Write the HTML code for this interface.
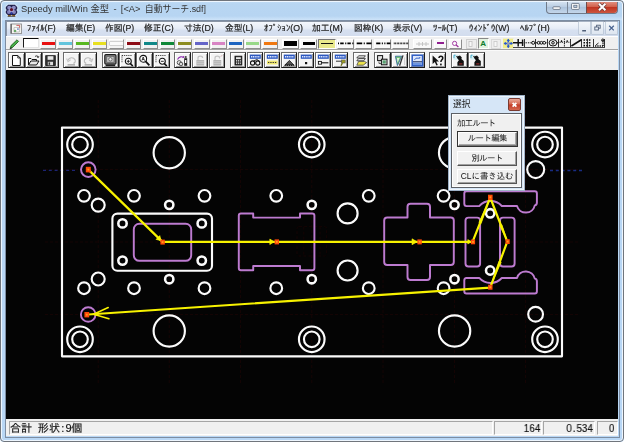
<!DOCTYPE html>
<html lang="ja">
<head>
<meta charset="utf-8">
<title>Speedy mill/Win 金型</title>
<style>
html,body{margin:0;padding:0;background:#fff;}
body{width:624px;height:442px;overflow:hidden;position:relative;font-family:"Liberation Sans","Noto Sans CJK JP",sans-serif;}
#win{position:absolute;left:0;top:0;width:624px;height:442px;overflow:hidden;
 background:linear-gradient(#c4def6 0px,#b8d6f2 4px,#b7d5f2 16px,#cbe2f8 19.500px,#b9d7f4 21px,#b9d7f5 100%);border-radius:4px 4px 4px 4px;}

#frame{position:absolute;left:0;top:0;width:622.400px;height:440.400px;border:0.800px solid #70757c;border-radius:4px;box-shadow:inset 0 0 0 1px #eef6fe;}
#inb{position:absolute;left:4.800px;top:20px;width:613.400px;height:416.400px;border:0.800px solid #7c8da3;}
.abs{position:absolute;}
#title,.mi,.st,.dl,.db,#dlgt{will-change:transform;}
#title{position:absolute;left:20.5px;top:2.900px;font-size:9.33px;line-height:13px;color:#333;white-space:nowrap;}
/* window buttons */
#wbtn{position:absolute;left:546px;top:0;width:72px;height:13.5px;border:1px solid #6f7a8a;border-top:none;border-radius:0 0 4px 4px;overflow:hidden;box-sizing:border-box;background:linear-gradient(#dfeaf6,#bccfe4 50%,#a9c0da 51%,#c4d6ea);}
#wbtn .c{position:absolute;left:39px;top:0;width:33px;height:13.5px;background:linear-gradient(#e5a294,#d2614c 48%,#bf3420 52%,#cf5b45);border-left:1px solid #6f4a48;}
#wbtn .s1{position:absolute;left:19.5px;top:0;width:1px;height:13px;background:#7b8797;}
/* menubar */
#menubar{position:absolute;left:5.500px;top:20.500px;width:612.800px;height:15.5px;box-sizing:border-box;border-top:1px solid #8a94a3;border-left:1px solid #8a94a3;background:linear-gradient(#f4f7fc,#e6ecf6 45%,#d6e0f0 60%,#d3ddee);}
.mi{-webkit-text-stroke:0.200px #222;position:absolute;top:23.2px;font-size:8.75px;line-height:11px;color:#222;white-space:nowrap;font-family:"Liberation Sans","IPAGothic","Noto Sans CJK JP",sans-serif;}
/* toolbars */
#tb1{position:absolute;left:5.500px;top:36px;width:612.800px;height:14px;background:#f0f0f0;border-top:1px solid #fff;border-bottom:1px solid #a4a4a4;box-sizing:border-box;}
#tb2{position:absolute;left:5.500px;top:50px;width:612.800px;height:20px;background:#f0f0f0;border-top:1px solid #fafafa;box-sizing:border-box;}
.sw{position:absolute;top:38.5px;height:10px;width:15.6px;box-sizing:border-box;background:#f2f2f2;border:1px solid;border-color:#fff #8e8e8e #8e8e8e #fff;}
.sw i{position:absolute;left:0.300px;right:0.300px;top:2.200px;height:3.600px;}
.ln{position:absolute;top:38.5px;height:10px;width:17.4px;box-sizing:border-box;background:#f9f9f9;border:1px solid;border-color:#fff #8e8e8e #8e8e8e #fff;}
.ln i{position:absolute;left:1.5px;right:1.5px;}
.bt{position:absolute;top:51.8px;width:16.6px;height:16px;box-sizing:border-box;background:#f4f4f4;border:1px solid;border-color:#6a6a6a #1c1c1c #1c1c1c #6a6a6a;box-shadow:inset 1px 1px 0 #fff,inset -1px -1px 0 #9c9c9c;}
.bt svg{position:absolute;left:0;top:0.300px;width:14.6px;height:15px;}
/* canvas */
#cv{position:absolute;left:5.500px;top:70px;width:612.800px;height:348.5px;background:#040404;}
/* status */
#status{position:absolute;left:5.500px;top:418.600px;width:612.800px;height:17.700px;background:#f0f0f0;}
.pane{position:absolute;top:420.900px;height:14.300px;box-sizing:border-box;border:1px solid;border-color:#a5a5a5 #fff #fff #a5a5a5;}
.st{-webkit-text-stroke:0.150px #111;position:absolute;top:422.300px;font-size:11.100px;line-height:12px;color:#111;white-space:nowrap;font-family:"Liberation Sans","IPAGothic","Noto Sans CJK JP",sans-serif;}
/* dialog */
#dlg{position:absolute;left:448px;top:94.5px;width:76.5px;height:96px;box-sizing:border-box;background:#d6e6f7;border:1px solid #9fb3c8;box-shadow:inset 0 0 0 1px #eef5fc;}
#dlgt{position:absolute;left:453px;top:98.600px;font-size:8.8px;line-height:11px;color:#222;}
#dlgx{position:absolute;left:507.5px;top:97.5px;width:13px;height:13.5px;box-sizing:border-box;border:1px solid #7a3a30;border-radius:2px;background:linear-gradient(#e9a898,#d5654f 48%,#c23a25 52%,#d4674f);}
#dlgc{position:absolute;left:451px;top:113px;width:70.5px;height:74.5px;box-sizing:border-box;background:#f0f0f0;border:1px solid #5c6066;box-shadow:inset 0 0 0 1px #fdfdfd;}
.dl{position:absolute;font-size:8.400px;line-height:11px;color:#111;white-space:nowrap;font-family:"Liberation Sans","IPAGothic","Noto Sans CJK JP",sans-serif;}
.db{position:absolute;left:457.200px;width:60.200px;height:15.200px;box-sizing:border-box;background:#f1f1f1;border:1px solid;border-color:#fff #555 #555 #fff;box-shadow:inset -1px -1px 0 #a0a0a0;font-size:8.400px;line-height:13px;text-align:center;color:#111;white-space:nowrap;font-family:"Liberation Sans","IPAGothic","Noto Sans CJK JP",sans-serif;}
.mdi{position:absolute;top:22px;width:11px;height:12px;box-sizing:border-box;background:linear-gradient(#f4f7fb,#dde5f0);box-shadow:0 0 0 0.7px #b4c0d0;}
.mdi svg{position:absolute;left:0;top:0}
.sn{font-size:11.600px;transform:scaleX(0.860);transform-origin:right center;}
.snp{position:absolute;top:38.6px;width:11.5px;height:9.6px;box-sizing:border-box;background:#f2f2f2;border-right:1px solid #333;border-bottom:1px solid #444;}
.snp svg{position:absolute;left:0;top:-0.4px}
.hw{display:inline-block;width:5.600px;text-align:center;white-space:pre;}
</style>
</head>
<body>
<div id="win">
<svg class="abs" style="left:5px;top:4.200px;filter:drop-shadow(0 0 0.800px #fff)" width="13" height="13" viewBox="0 0 13 13">
<path d="M3.200 0.800H9.800L12.200 3V5L11.200 6L12.200 7V9L10 11.200H3L0.800 9V7L1.800 6L0.800 5V3Z" fill="#20204c"/>
<circle cx="4.200" cy="3.800" r="2" fill="#8d8cc4"/><circle cx="8.800" cy="3.800" r="2" fill="#8d8cc4"/><circle cx="3.900" cy="8" r="1.900" fill="#8483bc"/><circle cx="9.100" cy="8" r="1.900" fill="#8483bc"/>
<circle cx="6.500" cy="6" r="2.500" fill="#a4a2d4"/><circle cx="6.500" cy="5.600" r="1.600" fill="#5e1226"/><circle cx="6.500" cy="9.300" r="1" fill="#2a3cb4"/>
<path d="M3 11.700H5.800M7.200 11.700H10" stroke="#8a6420" stroke-width="1.200"/><path d="M2.600 12.400H10.400" stroke="#2a2420" stroke-width="0.700"/></svg>

<div id="title">Speedy mill/Win 金型<span style="word-spacing:1.700px"> - [&lt;A&gt; </span><span style="font-size:8.900px">自動サーチ.sdf]</span></div>
<div id="wbtn"><div class="s1"></div><div class="c"></div></div>
<svg class="abs" style="left:546px;top:0" width="72" height="14" viewBox="0 0 72 14">
<rect x="7" y="6.8" width="7.2" height="2.600" rx="0.6" fill="#fff" stroke="#5a6677" stroke-width="0.8"/>
<rect x="25.6" y="3.400" width="7.6" height="6" rx="0.8" fill="#fff" stroke="#5a6677" stroke-width="0.8"/><rect x="27.8" y="5.2" width="3.2" height="2.2" fill="#b9cbe0" stroke="#5a6677" stroke-width="0.7"/>
<path d="M53 3.800L59.400 10.2M59.4 3.8L53 10.2" stroke="#6a3a38" stroke-width="3.4"/><path d="M53 3.8L59.4 10.2M59.4 3.8L53 10.200" stroke="#fff" stroke-width="2"/>
</svg>
<div id="menubar"></div>
<svg class="abs" style="left:10px;top:23px" width="13" height="12" viewBox="0 0 13 12">
<rect x="1" y="1" width="10.400" height="9.600" fill="#f6f6f2" stroke="#8a8a8a" stroke-width="0.900"/><path d="M1.200 1V10.600" stroke="#666" stroke-width="1.300"/>
<path d="M4 4.600H9.400V9H4Z" fill="#fff" stroke="#aaa" stroke-width="0.700"/><path d="M6.400 2.400H9.600V4.800" stroke="#c85050" stroke-width="0.900" fill="none"/><rect x="4" y="6.800" width="2.200" height="2.200" fill="#68a868"/><rect x="7" y="5.400" width="1.800" height="1.400" fill="#7088c8"/></svg>
<div class="mdi" style="left:578.6px"><svg width="11" height="12"><path d="M3.2 8.800H7" stroke="#50607a" stroke-width="1.600"/></svg></div>
<div class="mdi" style="left:592.2px"><svg width="11" height="12"><rect x="4.6" y="3.2" width="3.6" height="3" fill="none" stroke="#50607a" stroke-width="0.9"/><rect x="2.800" y="5" width="3.6" height="3" fill="#e8eef7" stroke="#50607a" stroke-width="0.9"/></svg></div>
<div class="mdi" style="left:605.8px"><svg width="11" height="12"><path d="M3.200 3.800L7.800 8.400M7.800 3.800L3.200 8.400" stroke="#4a6490" stroke-width="1.300"/></svg></div>
<div class="mi" style="left:26.8px">ﾌｧｲﾙ(F)</div>
<div class="mi" style="left:66.2px">編集(E)</div>
<div class="mi" style="left:105px">作図(P)</div>
<div class="mi" style="left:144.2px">修正(C)</div>
<div class="mi" style="left:184.2px">寸法(D)</div>
<div class="mi" style="left:225px">金型(L)</div>
<div class="mi" style="left:263.8px">ｵﾌﾟｼｮﾝ(O)</div>
<div class="mi" style="left:312.3px">加工(M)</div>
<div class="mi" style="left:353.5px">図枠(K)</div>
<div class="mi" style="left:393px">表示(V)</div>
<div class="mi" style="left:433px">ﾂｰﾙ(T)</div>
<div class="mi" style="left:468.8px">ｳｨﾝﾄﾞｳ(W)</div>
<div class="mi" style="left:520px">ﾍﾙﾌﾟ(H)</div>
<div id="tb1"></div>
<div class="sw" style="left:22.6px;width:16.600px;top:38px;height:10.400px;background:#fff;border-width:1.600px 1px 1px 1.300px;border-color:#0c0c0c #e4e4e4 #e4e4e4 #1c1c1c"></div>
<div class="sw" style="left:40.3px"><i style="background:#e81010"></i></div>
<div class="sw" style="left:57.4px"><i style="background:#62c4dc"></i></div>
<div class="sw" style="left:74.4px"><i style="background:#58b820"></i></div>
<div class="sw" style="left:91.5px"><i style="background:#e8e020"></i></div>
<div class="sw" style="left:108.6px"><i style="background:#fafafa;box-shadow:0 0 0 0.6px #bbb"></i></div>
<div class="sw" style="left:125.7px"><i style="background:#8c0a14"></i></div>
<div class="sw" style="left:142.8px"><i style="background:#108888"></i></div>
<div class="sw" style="left:159.8px"><i style="background:#108838"></i></div>
<div class="sw" style="left:176.9px"><i style="background:#8c8c20"></i></div>
<div class="sw" style="left:194.0px"><i style="background:#6464c8"></i></div>
<div class="sw" style="left:211.1px"><i style="background:#d884c4"></i></div>
<div class="sw" style="left:228.2px"><i style="background:#1c64c0"></i></div>
<div class="sw" style="left:245.2px"><i style="background:#98d888"></i></div>
<div class="sw" style="left:262.3px"><i style="background:#f07810"></i></div>
<svg class="abs" style="left:8.5px;top:37.5px" width="11" height="12" viewBox="0 0 11 12"><path d="M1.2 10.2 L2 7.6 L8 1.8 L9.6 3.4 L3.6 9.4 Z" fill="#48b048" stroke="#1c5c1c" stroke-width="0.8"/><path d="M0.8 10.8 L3.2 9.8" stroke="#222" stroke-width="0.9"/></svg>
<div class="ln" style="left:281.7px;"><i style="top:1.8px;height:4.6px;background:#000"></i></div>
<div class="ln" style="left:300.1px;"><i style="top:2.900px;height:2.400px;background:#000"></i></div>
<div class="ln" style="left:318.4px;background:#e9e98c;border-color:#777 #fff #fff #777;"><i style="top:3.200px;height:1.600px;background:#111"></i></div>
<div class="ln" style="left:336.8px;"><svg class="abs" style="left:0;top:-0.200px" width="16" height="8"><path d="M0 4.300H1M2.2 4.300H5.7M7.2 4.300H8.3M9.4 4.300H12.8M14.3 4.300H15.4" stroke="#000" stroke-width="1.700" fill="none"/></svg></div>
<div class="ln" style="left:355.1px;"><svg class="abs" style="left:0;top:-0.200px" width="16" height="8"><path d="M0.7 4.300H6.2M7.7 4.300H8.8M10.4 4.300H15.5" stroke="#000" stroke-width="1.700" fill="none"/></svg></div>
<div class="ln" style="left:373.5px;"><svg class="abs" style="left:0;top:-0.200px" width="16" height="8"><path d="M1.2 4.300H5.4M6.8 4.300H7.9M9.3 4.300H10.4M11.7 4.300H15.5" stroke="#000" stroke-width="1.700" fill="none"/></svg></div>
<div class="ln" style="left:391.9px;"><svg class="abs" style="left:0;top:-0.200px" width="16" height="8"><path d="M0.8 4.300H15.4" stroke="#000" stroke-width="1.700" fill="none" stroke-dasharray="0.800 0.700"/></svg></div>
<div class="ln" style="left:412.7px;width:19px"><svg class="abs" style="left:0;top:0" width="17" height="8"><path d="M2 4H15M5 2V6M8.5 2V6M12 2V6" stroke="#c4c4c4" stroke-width="1" fill="none"/></svg></div>
<div class="ln" style="left:434.3px;width:13px"><i style="top:2.8px;height:2.2px;background:#902090;left:2px;right:2px"></i></div>
<div class="ln" style="left:449.3px;width:13px"><svg class="abs" style="left:0;top:0" width="11" height="8"><circle cx="4.6" cy="3.400" r="2.100" fill="none" stroke="#9a2c9a" stroke-width="0.900"/><path d="M6.200 5L8.400 7" stroke="#9a2c9a" stroke-width="1.200"/></svg></div>
<svg class="abs" style="left:465.5px;top:38.5px" width="11" height="10"><rect x="0.5" y="0.5" width="10" height="9" fill="#ededed" stroke="#d0d0d0"/><rect x="3" y="2.5" width="3" height="5" fill="#f8f8f8" stroke="#c0c0c0" stroke-width="0.8"/></svg>
<div class="abs" style="left:478px;top:38.3px;width:11px;height:10.4px;box-sizing:border-box;border:1px solid;border-color:#888 #fff #fff #888;background:#e4f2e0"></div><div class="abs" style="left:480.2px;top:39.2px;font-size:8px;line-height:9px;font-weight:bold;color:#0c7c2c">A</div>
<svg class="abs" style="left:490.8px;top:38.5px" width="10" height="10"><rect x="0.5" y="0.5" width="9" height="9" fill="#efefef" stroke="#dadada"/><rect x="3" y="2.5" width="3" height="5" fill="#f8f8f8" stroke="#c8c8c8" stroke-width="0.8"/></svg>
<svg class="abs" style="left:503px;top:38px" width="11" height="11" viewBox="0 0 11 11">
<rect x="0" y="0.6" width="10.6" height="9.6" fill="#f0ec88"/>
<path d="M5.3 1.4V9.400M1.4 5.4H9.2" stroke="#2858d0" stroke-width="1.5"/><path d="M5.3 0.8L3.600 3.100H7ZM5.3 10L3.6 7.7H7ZM0.6 5.4L2.900 3.700V7.100ZM10 5.4L7.700 3.7V7.1Z" fill="#2858d0"/><circle cx="5.3" cy="5.4" r="1.3" fill="#9aa0b8"/></svg>
<div class="snp" style="left:513.2px"><svg width="11" height="10" viewBox="0 0 11 10"><g stroke="#111" stroke-width="1" fill="none"><path d="M0 4.800H10.500M5.200 1V8.600M9.6 1.600V8" stroke-width="1.500"/></g></svg></div>
<div class="snp" style="left:524.7px"><svg width="11" height="10" viewBox="0 0 11 10"><g stroke="#111" stroke-width="1" fill="none"><path d="M0.5 4.8H7" stroke-dasharray="1.4 1"/><circle cx="8.200" cy="4.8" r="1.500"/></g></svg></div>
<div class="snp" style="left:536.2px"><svg width="11" height="10" viewBox="0 0 11 10"><g stroke="#111" stroke-width="1" fill="none"><path d="M0 4.8H10.500"/><circle cx="2.6" cy="4.8" r="1.400" fill="#f2f2f2"/><circle cx="5.4" cy="4.8" r="1.4" fill="#f2f2f2"/><circle cx="8.200" cy="4.8" r="1.4" fill="#f2f2f2"/></g></svg></div>
<div class="snp" style="left:547.7px"><svg width="11" height="10" viewBox="0 0 11 10"><g stroke="#111" stroke-width="1" fill="none"><ellipse cx="5" cy="4.8" rx="3.900" ry="3.200"/><circle cx="5" cy="4.800" r="1.300"/><path d="M8.900 4.8H10.500"/></g></svg></div>
<div class="snp" style="left:559.2px"><svg width="11" height="10" viewBox="0 0 11 10"><g stroke="#111" stroke-width="1" fill="none"><path d="M5.4 0.600V9M0.5 4.200H10.400" stroke-dasharray="1.3 0.9"/><path d="M2.500 2.200V4M8.200 2.200V4" stroke-width="1.200"/></g></svg></div>
<div class="snp" style="left:570.7px"><svg width="11" height="10" viewBox="0 0 11 10"><g stroke="#111" stroke-width="1" fill="none"><path d="M0.400 8L10.400 1.800" stroke-width="1.600"/></g></svg></div>
<div class="snp" style="left:582.2px"><svg width="11" height="10" viewBox="0 0 11 10"><g stroke="#111" stroke-width="1" fill="none"><path d="M1.500 2H9.500M1.5 4.800H9.5M1.5 7.600H9.5" stroke-dasharray="1.500 1.200" stroke-width="1.600"/><path d="M5.500 0.8V9" stroke-width="0.800"/></g></svg></div>
<div class="snp" style="left:593.7px"><svg width="11" height="10" viewBox="0 0 11 10"><g stroke="#111" stroke-width="1" fill="none"><path d="M1 8H9M9 8V1.500" stroke-dasharray="1.3 1" stroke-width="1.500"/><path d="M2 7L4.500 5" stroke-width="0.900"/><circle cx="8.800" cy="2.200" r="1.200"/></g></svg></div>
<div id="tb2"></div>
<div class="bt" style="left:8.0px"><svg viewBox="0 0 14.6 15"><path d="M3.5 2.5H8.8L11.3 5V12.5H3.5Z" fill="#fff" stroke="#111" stroke-width="1"/><path d="M8.8 2.5V5H11.3" fill="none" stroke="#111" stroke-width="0.8"/></svg></div>
<div class="bt" style="left:25.1px"><svg viewBox="0 0 14.6 15"><path d="M2.5 12V5.5H5L6 6.5H10.5V8" fill="#fff" stroke="#111" stroke-width="1"/><path d="M2.5 12L4.8 8H13L10.5 12Z" fill="#e8e8e8" stroke="#111" stroke-width="1"/><path d="M9 3.5C10.5 2.3 12 2.8 12.3 4.4M12.3 4.4L11 3.9M12.3 4.4L12.9 3.2" fill="none" stroke="#111" stroke-width="0.8"/></svg></div>
<div class="bt" style="left:42.2px"><svg viewBox="0 0 14.6 15"><rect x="2.7" y="2.7" width="9.6" height="9.8" fill="#333" stroke="#111" stroke-width="0.8"/><rect x="4.6" y="3.2" width="5.8" height="3.6" fill="#e8e8e8"/><rect x="4.8" y="8.8" width="5.2" height="3.4" fill="#ddd"/><rect x="5.6" y="9.4" width="1.5" height="2.4" fill="#333"/></svg></div>
<div class="bt" style="left:63.3px"><svg viewBox="0 0 14.6 15"><path d="M4 7.300C5 4.300 9.500 3.800 11 6.800C11.800 8.600 10.800 10 9.400 10.400" fill="none" stroke="#bcbcbc" stroke-width="1.1"/><path d="M2.6 5.5L4 8.6L6.6 6.8" fill="none" stroke="#c6c6c6" stroke-width="1.1"/><path d="M3.600 11.800H11" stroke="#9c9c9c" stroke-width="1.200"/></svg></div>
<div class="bt" style="left:80.4px"><svg viewBox="0 0 14.6 15"><path d="M10.600 7.300C9.600 4.300 5.100 3.800 3.600 6.800C2.800 8.600 3.800 10 5.200 10.400" fill="none" stroke="#bcbcbc" stroke-width="1.1"/><path d="M12 5.5L10.6 8.6L8 6.8" fill="none" stroke="#c6c6c6" stroke-width="1.1"/><path d="M3.600 11.800H11" stroke="#9c9c9c" stroke-width="1.200"/></svg></div>
<div class="bt" style="left:102.0px"><svg viewBox="0 0 14.6 15"><rect x="1.800" y="1.600" width="11.200" height="9.600" rx="1.200" fill="#8a8a8a" stroke="#1c1c1c" stroke-width="1.200"/><rect x="3.800" y="3.400" width="7.200" height="5.800" fill="#c4c4c4" stroke="#555" stroke-width="0.600"/><circle cx="7.400" cy="6.300" r="1.700" fill="#f0f0f0" stroke="#444" stroke-width="0.700"/><path d="M2.600 12.500H12.200" stroke="#222" stroke-width="1.300"/></svg></div>
<div class="bt" style="left:119.1px"><svg viewBox="0 0 14.6 15"><path d="M2 2.5H12M2 2.5V10" stroke="#222" stroke-width="0.9" stroke-dasharray="1 0.9" fill="none"/><circle cx="8.3" cy="8.3" r="3" fill="#fff" stroke="#111" stroke-width="1.1"/><path d="M6.8 8.3H9.8M8.3 6.8V9.8" stroke="#111" stroke-width="0.9"/><path d="M10.4 10.6L12.8 13" stroke="#111" stroke-width="1.6"/></svg></div>
<div class="bt" style="left:136.2px"><svg viewBox="0 0 14.6 15"><circle cx="6.2" cy="5.8" r="3.4" fill="#fff" stroke="#111" stroke-width="1.1"/><path d="M4.9 7.6L6.2 4L7.5 7.6M5.4 6.5H7" stroke="#111" stroke-width="0.8" fill="none"/><path d="M8.6 8.4L12.4 12.4" stroke="#111" stroke-width="1.7"/></svg></div>
<div class="bt" style="left:153.3px"><svg viewBox="0 0 14.6 15"><path d="M2 2.5H12M2 2.5V10" stroke="#222" stroke-width="0.9" stroke-dasharray="1 0.9" fill="none"/><circle cx="8.3" cy="8.3" r="3" fill="#fff" stroke="#111" stroke-width="1.1"/><path d="M6.8 8.3H9.8" stroke="#111" stroke-width="0.9"/><path d="M10.4 10.6L12.8 13" stroke="#111" stroke-width="1.6"/></svg></div>
<div class="bt" style="left:174.4px"><svg viewBox="0 0 14.6 15"><path d="M2.5 6.5C4 3.5 7 3.2 9 4.4" fill="none" stroke="#9030b0" stroke-width="1.1"/><path d="M9 4.4L7.4 4.6M9 4.4L8.4 3" stroke="#9030b0" stroke-width="0.9"/><circle cx="4.2" cy="9.6" r="2" fill="#eee" stroke="#333" stroke-width="0.8"/><circle cx="6" cy="11" r="1.8" fill="#ddd" stroke="#333" stroke-width="0.8"/><rect x="9.2" y="5.2" width="3" height="7.6" fill="#222"/><rect x="9.8" y="3" width="1.8" height="2.4" fill="#555"/><rect x="10" y="7" width="1.4" height="3" fill="#fff"/></svg></div>
<div class="bt" style="left:191.5px"><svg viewBox="0 0 14.6 15"><path d="M5 7V5C5 2.6 9.6 2.6 9.6 5" fill="none" stroke="#c4c4c4" stroke-width="1.2"/><rect x="3.4" y="7" width="7.8" height="5.6" fill="#b4b4b4"/><path d="M3.4 8.8H11.2M3.4 10.6H11.2" stroke="#d4d4d4" stroke-width="0.7"/></svg></div>
<div class="bt" style="left:208.6px"><svg viewBox="0 0 14.6 15"><path d="M5 7V5C5 2.6 9.6 2.6 9.6 5V5.6" fill="none" stroke="#c4c4c4" stroke-width="1.2"/><rect x="3.4" y="7" width="7.8" height="5.6" fill="#b4b4b4"/><path d="M3.4 8.8H11.2M3.4 10.6H11.2" stroke="#d4d4d4" stroke-width="0.7"/><path d="M10.6 3.4L12.4 2.4" stroke="#d8b0b0" stroke-width="0.9"/></svg></div>
<div class="bt" style="left:229.6px"><svg viewBox="0 0 14.6 15"><rect x="4" y="3.2" width="6.8" height="8.8" fill="#333" stroke="#111" stroke-width="0.9"/><rect x="5" y="4.200" width="4.800" height="1.800" fill="#e8e8e8"/><path d="M5 7.4H9.800M5 9H9.8M5 10.600H9.8" stroke="#ddd" stroke-width="1" stroke-dasharray="1.2 0.8"/></svg></div>
<div class="bt" style="left:246.7px"><svg viewBox="0 0 14.6 15"><rect x="1.8" y="1.6" width="11" height="4.2" fill="#2c58c0"/><path d="M3 3.7H11.6" stroke="#dfe8ff" stroke-width="1.4" stroke-dasharray="1.2 0.6"/><circle cx="4.6" cy="10" r="2.1" fill="none" stroke="#111" stroke-width="1.1"/><circle cx="9.8" cy="10" r="2.1" fill="none" stroke="#111" stroke-width="1.1"/><path d="M5.5 8L9 6.6M9 6.6L11.6 8.2" stroke="#111" stroke-width="0.9" fill="none"/></svg></div>
<div class="bt" style="left:263.7px"><svg viewBox="0 0 14.6 15"><rect x="1.8" y="1.6" width="11" height="4.2" fill="#2c58c0"/><path d="M3 3.7H11.6" stroke="#dfe8ff" stroke-width="1.4" stroke-dasharray="1.2 0.6"/><rect x="2" y="7.6" width="10.6" height="3.8" fill="#f0e870"/><path d="M3 9.5H11.6" stroke="#333" stroke-width="1" stroke-dasharray="1.3 1"/></svg></div>
<div class="bt" style="left:280.8px"><svg viewBox="0 0 14.6 15"><rect x="1.8" y="1.6" width="11" height="4.2" fill="#2c58c0"/><path d="M3 3.7H11.6" stroke="#dfe8ff" stroke-width="1.4" stroke-dasharray="1.2 0.6"/><path d="M3 12L7.4 7.4L11.8 12Z" fill="#555" stroke="#111" stroke-width="0.8"/><path d="M2.4 12.4H12.4" stroke="#111" stroke-width="1" stroke-dasharray="1.4 0.8"/></svg></div>
<div class="bt" style="left:297.8px"><svg viewBox="0 0 14.6 15"><rect x="1.8" y="1.6" width="11" height="4.2" fill="#2c58c0"/><path d="M3 3.7H11.6" stroke="#dfe8ff" stroke-width="1.4" stroke-dasharray="1.2 0.6"/><rect x="6" y="9" width="2.2" height="2.2" fill="#111"/></svg></div>
<div class="bt" style="left:314.8px"><svg viewBox="0 0 14.6 15"><rect x="1.8" y="1.6" width="11" height="4.2" fill="#2c58c0"/><path d="M3 3.7H11.6" stroke="#dfe8ff" stroke-width="1.4" stroke-dasharray="1.2 0.6"/><rect x="2.4" y="8.4" width="3" height="2.8" fill="#fff" stroke="#111" stroke-width="0.9"/><path d="M5.4 9.8H12.4" stroke="#111" stroke-width="1.1"/></svg></div>
<div class="bt" style="left:331.8px"><svg viewBox="0 0 14.6 15"><rect x="1.8" y="1.6" width="11" height="4.2" fill="#2c58c0"/><path d="M3 3.7H11.6" stroke="#dfe8ff" stroke-width="1.4" stroke-dasharray="1.2 0.6"/><path d="M3 8.2H9.6" stroke="#333" stroke-width="1"/><rect x="8.6" y="7" width="3.6" height="3" fill="#a0a020" stroke="#555" stroke-width="0.6"/><path d="M9.4 10L8 12.8" stroke="#777720" stroke-width="1.4"/></svg></div>
<div class="bt" style="left:352.7px"><svg viewBox="0 0 14.6 15"><path d="M4.6 2.800H11.400L9.600 5H2.800Z" fill="#f4f4f4" stroke="#222" stroke-width="0.8"/><path d="M4.6 5.600H11.4L9.6 7.800H2.8Z" fill="#f4f4f4" stroke="#222" stroke-width="0.8"/><path d="M4.6 8.400H10.400L12.600 9.600L9.200 12.200H2.800Z" fill="#ece24c" stroke="#444" stroke-width="0.8"/></svg></div>
<div class="bt" style="left:374.3px"><svg viewBox="0 0 14.6 15"><rect x="2.6" y="2.6" width="5" height="5" fill="#e0e0e0" stroke="#111" stroke-width="1"/><rect x="6.4" y="6.2" width="5.6" height="5.6" fill="#e0e0e0" stroke="#111" stroke-width="1"/><rect x="7.6" y="7.4" width="3.2" height="3.2" fill="#58a070"/><path d="M4 8.5V10.5H6" stroke="#333" stroke-width="0.8" fill="none"/></svg></div>
<div class="bt" style="left:391.4px"><svg viewBox="0 0 14.6 15"><path d="M3.400 3.200H9.800L5.400 12.600Z" fill="#74c474" stroke="#3a6a9a" stroke-width="0.9"/><path d="M5 5H7.600L5.600 9.400Z" fill="#e8f4e8"/><path d="M11 2.400L7.600 12.800" stroke="#333" stroke-width="1.300"/><path d="M12.600 4.500V12" stroke="#c4c4c4" stroke-width="0.800"/></svg></div>
<div class="bt" style="left:408.5px"><svg viewBox="0 0 14.6 15"><rect x="2.200" y="2.200" width="10.400" height="10.600" fill="#dfe8fa" stroke="#2c5cc4" stroke-width="1.500"/><path d="M3 8.800H12" stroke="#1c2c58" stroke-width="1.100"/><path d="M4.400 7L6 5.200H9.800V4" stroke="#2c5cc4" stroke-width="0.900" fill="none"/><rect x="3" y="9.600" width="8.800" height="2.400" fill="#6c94e0"/></svg></div>
<div class="bt" style="left:429.4px"><svg viewBox="0 0 14.6 15"><path d="M2.6 2.4V11L4.8 9L6.4 12.6L7.8 12L6.2 8.4H9Z" fill="#111"/><path d="M9 5C9 2.6 12.8 2.6 12.8 5C12.8 6.8 10.9 6.8 10.9 9" fill="none" stroke="#111" stroke-width="1.5"/><rect x="10.1" y="10.6" width="1.6" height="1.8" fill="#111"/></svg></div>
<div class="bt" style="left:451.0px"><svg viewBox="0 0 14.6 15"><rect x="1.600" y="1.800" width="5" height="5" fill="#d8f0f4"/><path d="M5.800 3.200L8 2.400L9.800 4.400L9.400 6L11.800 8V12.800H5.400V9.200L7 7L5.600 5.400Z" fill="#111"/><path d="M4.600 3L7 6.400" stroke="#111" stroke-width="1.200"/><rect x="7.200" y="10.400" width="3.200" height="1" fill="#a82c2c"/><path d="M2 2.200H3.600M2 2.200V5.200" stroke="#38a8c8" stroke-width="0.900" fill="none"/></svg></div>
<div class="bt" style="left:468.1px"><svg viewBox="0 0 14.6 15"><rect x="1.600" y="1.800" width="5" height="5" fill="#d8f0f4"/><path d="M5.800 3.200L8 2.400L9.800 4.400L9.400 6L11.800 8V12.800H5.400V9.200L7 7L5.600 5.400Z" fill="#111"/><path d="M4.600 3L7 6.400" stroke="#111" stroke-width="1.200"/><rect x="7.200" y="10.400" width="3.200" height="1" fill="#a82c2c"/><path d="M2 2.200H3.600M2 2.200V5.200" stroke="#38a8c8" stroke-width="0.900" fill="none"/></svg></div>
<!--CANVAS-->
<div id="cv"></div>
<svg class="abs" style="left:0;top:0" width="624" height="442" viewBox="0 0 624 442">
<defs><clipPath id="cvclip"><rect x="5.500" y="70" width="612.800" height="348.600"/></clipPath></defs>
<g clip-path="url(#cvclip)" fill="none" stroke-linejoin="round">
<g stroke="#140404" stroke-width="1" stroke-dasharray="3 2">
<path d="M98.25 100V385"/>
<path d="M169.25 100V385"/>
<path d="M240.5 100V385"/>
<path d="M311.75 100V385"/>
<path d="M383 100V385"/>
<path d="M454.5 100V385"/>
<path d="M525.5 100V385"/>
<path d="M45 169.5H580"/>
<path d="M45 242H580"/>
<path d="M45 314.5H580"/>
<rect x="297" y="226.600" width="29.600" height="29.400" rx="2"/><path d="M303.800 226.600V256M320 226.600V256"/>
</g>
<path d="M43 170.400H77" stroke="#1c2474" stroke-width="1.300" stroke-dasharray="3 2.800"/>
<path d="M550 170.500H583" stroke="#182c84" stroke-width="1.300" stroke-dasharray="3 2.800"/>
<g stroke="#fbfbfb" stroke-width="2.150">
<rect x="62" y="127.6" width="500" height="228.7"/>
<circle cx="80" cy="144.5" r="12.8"/>
<circle cx="80" cy="144.5" r="7.8"/>
<circle cx="80" cy="339.3" r="12.8"/>
<circle cx="80" cy="339.3" r="7.8"/>
<circle cx="311.75" cy="144.5" r="12.8"/>
<circle cx="311.75" cy="144.5" r="7.8"/>
<circle cx="311.75" cy="339.3" r="12.8"/>
<circle cx="311.75" cy="339.3" r="7.8"/>
<circle cx="545" cy="144.5" r="12.8"/>
<circle cx="545" cy="144.5" r="7.8"/>
<circle cx="545" cy="339.3" r="12.8"/>
<circle cx="545" cy="339.3" r="7.8"/>
<circle cx="169.25" cy="152.7" r="15.65"/>
<circle cx="169.25" cy="331" r="15.65"/>
<circle cx="454.6" cy="152.7" r="15.65"/>
<circle cx="454.6" cy="331" r="15.65"/>
<circle cx="535.7" cy="169.6" r="8.5"/>
<circle cx="535.6" cy="314.3" r="7.4"/>
<circle cx="84" cy="195.8" r="5.85"/>
<circle cx="84" cy="288.2" r="5.85"/>
<circle cx="134" cy="195.8" r="5.85"/>
<circle cx="134" cy="288.2" r="5.85"/>
<circle cx="204.5" cy="195.8" r="5.85"/>
<circle cx="204.5" cy="288.2" r="5.85"/>
<circle cx="276.25" cy="195.8" r="5.85"/>
<circle cx="276.25" cy="288.2" r="5.85"/>
<circle cx="368.75" cy="195.8" r="5.85"/>
<circle cx="368.75" cy="288.2" r="5.85"/>
<circle cx="443.6" cy="195.8" r="5.85"/>
<circle cx="443.6" cy="288.2" r="5.85"/>
<circle cx="98.2" cy="205.1" r="6.5"/>
<circle cx="98.2" cy="279" r="6.5"/>
<circle cx="169.25" cy="204.8" r="4.15" stroke-width="2.550"/>
<circle cx="169.25" cy="279.2" r="4.15" stroke-width="2.550"/>
<circle cx="311.75" cy="204.8" r="4.15" stroke-width="2.550"/>
<circle cx="311.75" cy="279.2" r="4.15" stroke-width="2.550"/>
<circle cx="454.5" cy="204.8" r="4.15" stroke-width="2.550"/>
<circle cx="454.5" cy="279.2" r="4.15" stroke-width="2.550"/>
<circle cx="490.2" cy="213.3" r="4.2" stroke-width="2.550"/>
<circle cx="490.2" cy="270.5" r="4.2" stroke-width="2.550"/>
<circle cx="347.6" cy="213.4" r="10"/>
<circle cx="347.6" cy="270.5" r="10"/>
<rect x="112.400" y="213.600" width="99.600" height="57.100" rx="5"/>
<circle cx="122.5" cy="223.4" r="4.2" stroke-width="2.550"/>
<circle cx="122.5" cy="260.6" r="4.2" stroke-width="2.550"/>
<circle cx="201.75" cy="223.4" r="4.2" stroke-width="2.550"/>
<circle cx="201.75" cy="260.6" r="4.2" stroke-width="2.550"/>
</g>
<g stroke="#bd7bd0" stroke-width="1.950">
<circle cx="88.3" cy="169.6" r="7.3"/>
<circle cx="88.2" cy="314.5" r="7.3"/>
<rect x="133.8" y="223.8" width="57.4" height="37" rx="5.5"/>
<path d="M241 213.400H253.2V217.6H300V213.400H312.2Q314.4 213.400 314.4 215.600V268Q314.4 270.2 312.2 270.2H300V266H253.2V270.2H241Q238.8 270.2 238.8 268V215.600Q238.8 213.400 241 213.400Z"/>
<path d="M410.5 203.8H427Q430 203.8 430 206.8V217.5H450.8Q453.8 217.5 453.8 220.5V262Q453.8 265 450.8 265H430V277Q430 280 427 280H410.5Q407.5 280 407.5 277V265H387.2Q384.2 265 384.2 262V220.5Q384.2 217.5 387.2 217.5H407.5V206.8Q407.5 203.8 410.5 203.8Z"/>
<rect x="465.5" y="217.6" width="14.6" height="48.8" rx="3"/>
<rect x="500" y="217.6" width="14.6" height="48.8" rx="3"/>
<path d="M466.5 191.300H534.8Q536.9 191.300 536.9 193.400V202.600Q536.9 205.200 534.800 205.400A9.200 9.200 0 0 1 517 206H501.800A15.200 15.200 0 0 0 479.200 206.100H466.5Q464.3 205.9 464.3 203.7V193.400Q464.3 191.300 466.500 191.300Z"/>
<path d="M466.5 293.400H534.8Q536.9 293.4 536.9 291.2V281.400Q536.9 278.800 534.800 278.600A9.200 9.200 0 0 0 517 278H501.800A15.200 15.200 0 0 1 479.200 277.900H466.5Q464.3 278.1 464.3 280.3V291.2Q464.3 293.4 466.5 293.4Z"/>
</g>
<g stroke="#f7f200" stroke-width="2.200" stroke-linecap="round">
<path d="M88.3 169.6L162.5 241.900H472.5L490.2 197.5L507.3 241.6L490.2 287.6L88.2 314.5"/>
</g>
<path d="M161.2 240.7L156.0 239.4L159.8 235.6Z" fill="#f7f200" stroke="#f7f200" stroke-width="0.6"/>
<path d="M274.2 241.8L269.8 244.6L269.8 239.0Z" fill="#f7f200" stroke="#f7f200" stroke-width="0.6"/>
<path d="M417.2 241.8L412.0 244.8L412.0 238.8Z" fill="#f7f200" stroke="#f7f200" stroke-width="0.6"/>
<path d="M471.4 241.8L467.8 244.0L467.8 239.6Z" fill="#f7f200" stroke="#f7f200" stroke-width="0.6"/>
<path d="M490.2 198L481.2 223.6L478.8 222.6Z" fill="#f7f200" stroke="#f7f200" stroke-width="0.5"/>
<path d="M507.3 241L501.9 224.6L499.5 225.6Z" fill="#f7f200" stroke="#f7f200" stroke-width="0.5"/>
<path d="M490.4 286.6L501.3 262.2L498.900 261.2Z" fill="#f7f200" stroke="#f7f200" stroke-width="0.5"/>
<path d="M108.2 307.6L93.6 314.2L108.9 318.8" stroke="#f7f200" stroke-width="1.6" fill="none" stroke-linecap="round"/>
<path d="M91 314.300L98.500 311.800V316Z" fill="#f7f200"/>
<rect x="85.80" y="166.80" width="5" height="5.6" fill="#ff4a08"/>
<rect x="87.40" y="168.70" width="1.8" height="1.8" fill="#ffb020" opacity="0.8"/>
<rect x="160.40" y="239.60" width="4.4" height="5.0" fill="#ff4a08"/>
<rect x="161.70" y="241.20" width="1.8" height="1.8" fill="#ffb020" opacity="0.8"/>
<rect x="274.60" y="239.40" width="4.4" height="5.0" fill="#ff4a08"/>
<rect x="275.90" y="241.00" width="1.8" height="1.8" fill="#ffb020" opacity="0.8"/>
<rect x="417.40" y="239.40" width="4.4" height="5.0" fill="#ff4a08"/>
<rect x="418.70" y="241.00" width="1.8" height="1.8" fill="#ffb020" opacity="0.8"/>
<rect x="470.90" y="239.50" width="4.2" height="4.8" fill="#ff4a08"/>
<rect x="472.10" y="241.00" width="1.8" height="1.8" fill="#ffb020" opacity="0.8"/>
<rect x="488.00" y="194.70" width="4.6" height="5.199999999999999" fill="#ff4a08"/>
<rect x="489.40" y="196.40" width="1.8" height="1.8" fill="#ffb020" opacity="0.8"/>
<rect x="505.50" y="239.20" width="4.2" height="4.8" fill="#ff4a08"/>
<rect x="506.70" y="240.70" width="1.8" height="1.8" fill="#ffb020" opacity="0.8"/>
<rect x="488.10" y="284.70" width="4.4" height="5.0" fill="#ff4a08"/>
<rect x="489.40" y="286.30" width="1.8" height="1.8" fill="#ffb020" opacity="0.8"/>
<rect x="84.40" y="312.00" width="4.8" height="5.3999999999999995" fill="#ff4a08"/>
<rect x="85.90" y="313.80" width="1.8" height="1.8" fill="#ffb020" opacity="0.8"/>
</g></svg>
<div id="dlg"></div>
<div id="dlgt">選択</div>
<div id="dlgx"><svg class="abs" style="left:0;top:0" width="11" height="11.5"><path d="M3.6 3.9L7.4 7.7M7.4 3.9L3.6 7.700" stroke="#fff" stroke-width="1.7"/></svg></div>
<div id="dlgc"></div>
<div class="dl" style="left:457.100px;top:117.800px;letter-spacing:-0.660px">加工ルート</div>
<div class="db" style="top:132.300px;height:14px;left:458px;width:58.600px;line-height:11.600px;border-color:#fff #777 #777 #fff;box-shadow:inset -1px -1px 0 #aaa,0 0 0 1px #333;letter-spacing:-0.600px">ルート編集</div>
<div class="db" style="top:150.600px;letter-spacing:-0.580px">別ルート</div>
<div class="db" style="top:169px">CLに書き込む</div>
<div id="status"></div>
<div class="pane" style="left:8.500px;width:484px"></div>
<div class="pane" style="left:494px;width:47.5px"></div>
<div class="pane" style="left:542.800px;width:52.5px"></div>
<div class="pane" style="left:596.6px;width:21.4px"></div>
<div class="st" id="st0" style="left:10.400px">合計<span class="hw"> </span>形状<span class="hw">:</span><span class="hw">9</span>個</div>
<div class="st sn" id="st1" style="right:83.600px">164</div>
<div class="st sn" id="st2" style="right:31px">0<span class="hw" style="width:5.200px">.</span>534</div>
<div class="st sn" id="st3" style="right:10px">0</div>
<div id="frame"></div><div id="inb"></div>
</div>
</body>
</html>
